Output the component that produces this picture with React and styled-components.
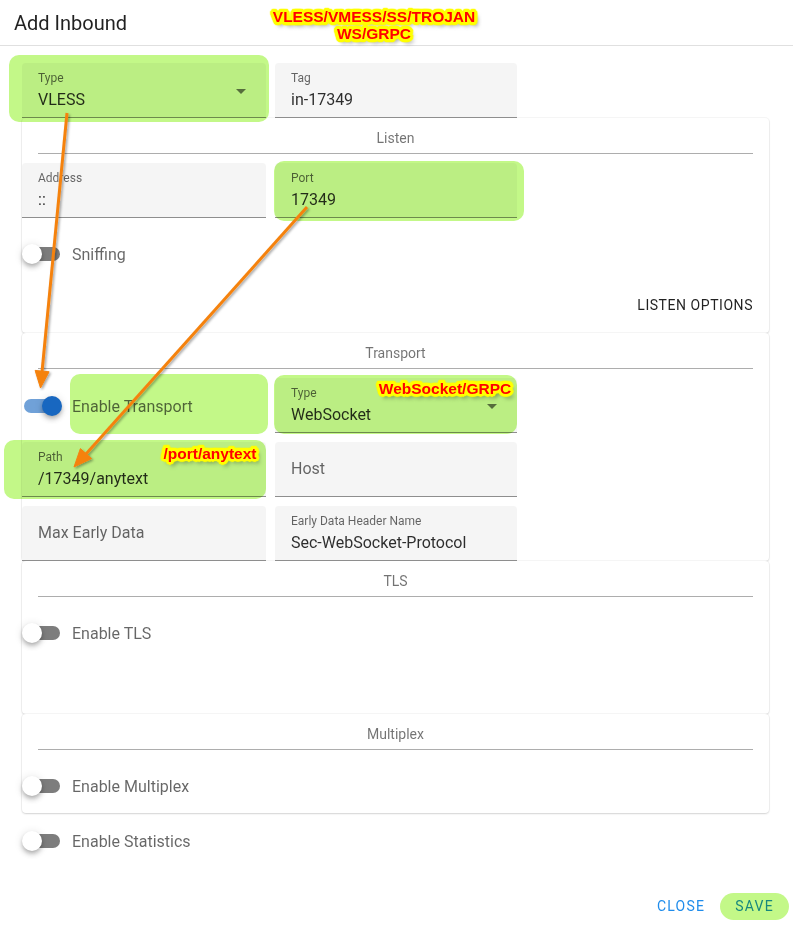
import React from 'react';
import styled, { createGlobalStyle, css } from 'styled-components';

const GlobalStyle = createGlobalStyle`
  html, body {
    margin: 0;
    padding: 0;
    background: #fff;
  }
  body {
    font-family: Roboto, "Liberation Sans", sans-serif;
  }
`;

// green marker boxes drawn over the screenshot
const highlight = css`
  ${props => props.$hl && css`
    &::after {
      content: '';
      position: absolute;
      inset: ${props.$hl};
      background: #c3f888;
      border-radius: ${props.$radius || '10px'};
      mix-blend-mode: multiply;
      pointer-events: none;
    }
  `}
`;

const Dialog = styled.div`
  position: relative;
  width: 793px;
  height: 928px;
  overflow: hidden;
  background: #fff;
`;

const Header = styled.div`
  height: 45px;
  border-bottom: 1px solid rgba(0, 0, 0, 0.12);
  padding-left: 14px;
  display: flex;
  align-items: center;
  font-size: 20px;
  color: rgba(0, 0, 0, 0.87);
`;

const Body = styled.div`
  padding: 17px 24px 0 22px;
`;

const FieldGrid = styled.div`
  display: grid;
  grid-template-columns: 244px 242px;
  column-gap: 9px;
  row-gap: 9px;
  margin-top: ${props => props.$mt || '0px'};
`;

const Field = styled.div`
  position: relative;
  box-sizing: border-box;
  height: 55px;
  padding: 0 16px;
  background: #f5f5f5;
  border-radius: 4px 4px 0 0;
  border-bottom: 1px solid rgba(0, 0, 0, 0.42);
  display: flex;
  flex-direction: column;
  justify-content: ${props => (props.$empty ? 'center' : 'flex-start')};
  ${highlight}
`;

const FieldLabel = styled.div`
  margin-top: 8px;
  font-size: 12px;
  line-height: 14px;
  color: rgba(0, 0, 0, 0.6);
`;

const FieldValue = styled.div`
  margin-top: 3px;
  font-size: 16px;
  line-height: 24px;
  color: rgba(0, 0, 0, 0.82);
`;

const Placeholder = styled.div`
  font-size: 16px;
  line-height: 24px;
  color: rgba(0, 0, 0, 0.6);
`;

const Caret = styled.span`
  position: absolute;
  right: 20px;
  top: 26px;
  width: 0;
  height: 0;
  border-left: 5px solid transparent;
  border-right: 5px solid transparent;
  border-top: 5px solid rgba(0, 0, 0, 0.54);
`;

const Card = styled.div`
  border-radius: 4px;
  background: #fff;
  box-shadow: 0 0 0 1px rgba(0, 0, 0, 0.035), 0 1px 2px rgba(0, 0, 0, 0.14);
  padding-bottom: ${props => props.$pb || '0px'};
`;

const CardTitle = styled.div`
  padding-top: 10px;
  font-size: 14px;
  line-height: 20px;
  text-align: center;
  color: rgba(0, 0, 0, 0.55);
`;

const Divider = styled.div`
  margin: 5px 16px 0;
  height: 1px;
  background: rgba(0, 0, 0, 0.32);
`;

const SwitchRow = styled.div`
  display: flex;
  align-items: center;
  height: ${props => props.$h || '40px'};
  margin-top: ${props => props.$mt || '0px'};
`;

const SwitchControl = styled.div`
  position: relative;
  flex: none;
  width: 40px;
  height: 20px;
  margin-right: 10px;
`;

const Track = styled.div`
  position: absolute;
  left: 2px;
  top: 3px;
  width: 36px;
  height: 14px;
  border-radius: 7px;
  background: ${props => (props.$on ? 'rgba(24, 103, 192, 0.62)' : '#7d7d7d')};
`;

const Thumb = styled.div`
  position: absolute;
  top: 0;
  left: ${props => (props.$on ? '20px' : '0px')};
  width: 20px;
  height: 20px;
  border-radius: 50%;
  background: ${props => (props.$on ? '#1867c0' : '#fff')};
  box-shadow: 0 2px 4px -1px rgba(0, 0, 0, 0.2), 0 4px 5px 0 rgba(0, 0, 0, 0.14),
    0 1px 10px 0 rgba(0, 0, 0, 0.12);
`;

const SwitchLabel = styled.div`
  position: relative;
  flex: ${props => (props.$grow ? '1' : 'none')};
  align-self: stretch;
  display: flex;
  align-items: center;
  padding-top: ${props => props.$pt || '0px'};
  font-size: 16px;
  color: rgba(0, 0, 0, 0.6);
  ${highlight}
`;

const OptionsRow = styled.div`
  display: flex;
  justify-content: flex-end;
  margin-top: 13px;
  padding-right: 16px;
`;

const TextButton = styled.button`
  position: relative;
  height: 36px;
  padding: 0 ${props => props.$px || '0px'};
  border: none;
  background: transparent;
  font-family: Roboto, "Liberation Sans", sans-serif;
  font-size: 14px;
  letter-spacing: ${props => props.$ls || '1.25px'};
  text-transform: uppercase;
  color: ${props => props.$color || 'rgba(0, 0, 0, 0.87)'};
  cursor: pointer;
  ${highlight}
`;

const Footer = styled.div`
  display: flex;
  justify-content: flex-end;
  margin-top: 27px;
  padding-right: 4px;
`;

const Overlay = styled.div`
  position: absolute;
  inset: 0;
  pointer-events: none;
`;

const ring = [];
for (let i = 0; i < 24; i++) {
  const a = (i / 24) * Math.PI * 2;
  ring.push(`${(Math.cos(a) * 3).toFixed(2)}px ${(Math.sin(a) * 3).toFixed(2)}px 1px #ffff00`);
}
const yellowRing = ring.join(', ');

const Callout = styled.div`
  position: absolute;
  left: ${props => props.$x}px;
  top: ${props => props.$y}px;
  transform: translate(-50%, -50%);
  font-family: "Liberation Sans", Arial, sans-serif;
  font-weight: 700;
  font-size: 15.5px;
  line-height: 17px;
  text-align: center;
  white-space: nowrap;
  color: #ff0000;
  text-shadow: ${yellowRing}, 3px 4px 4px rgba(0, 0, 0, 0.55);
`;

const Switch = ({ on }) => (
  <SwitchControl>
    <Track $on={on} />
    <Thumb $on={on} />
  </SwitchControl>
);

const Arrows = () => (
  <svg width="793" height="928" style={{ position: 'absolute', left: 0, top: 0 }}>
    <defs>
      <filter id="shadow" x="-20%" y="-20%" width="140%" height="140%">
        <feDropShadow dx="1.5" dy="1.5" stdDeviation="1" floodColor="#000" floodOpacity="0.35" />
      </filter>
    </defs>
    <g filter="url(#shadow)" fill="#f5820f" stroke="#f5820f">
      <line x1="67" y1="113" x2="42" y2="372" strokeWidth="3" />
      <polygon points="40.5,388 49.1,371.8 35.1,370.4" strokeWidth="1" strokeLinejoin="round" />
      <line x1="307" y1="207" x2="86" y2="454" strokeWidth="3" />
      <polygon points="74,467 91.6,458.6 80.4,448.6" strokeWidth="1" strokeLinejoin="round" />
    </g>
  </svg>
);

const App = () => (
  <>
    <GlobalStyle />
    <Dialog>
      <Header>Add Inbound</Header>
      <Body>
        <FieldGrid>
          <Field $hl="-8px -3px -5px -13px">
            <FieldLabel>Type</FieldLabel>
            <FieldValue>VLESS</FieldValue>
            <Caret />
          </Field>
          <Field>
            <FieldLabel>Tag</FieldLabel>
            <FieldValue>in-17349</FieldValue>
          </Field>
        </FieldGrid>

        <Card $pb="10px">
          <CardTitle>Listen</CardTitle>
          <Divider />
          <FieldGrid $mt="9px">
            <Field>
              <FieldLabel>Address</FieldLabel>
              <FieldValue>::</FieldValue>
            </Field>
            <Field $hl="-2px -7px -4px -1px">
              <FieldLabel>Port</FieldLabel>
              <FieldValue>17349</FieldValue>
            </Field>
          </FieldGrid>
          <SwitchRow $mt="16px">
            <Switch />
            <SwitchLabel>Sniffing</SwitchLabel>
          </SwitchRow>
          <OptionsRow>
            <TextButton $ls="0.55px">Listen Options</TextButton>
          </OptionsRow>
        </Card>

        <Card>
          <CardTitle>Transport</CardTitle>
          <Divider />
          <FieldGrid $mt="9px">
            <SwitchRow $h="55px">
              <Switch on />
              <SwitchLabel $grow $pt="2px" $hl="-4px -2px -1px -2px">Enable Transport</SwitchLabel>
            </SwitchRow>
            <Field $hl="-3px 0 -2px -1px">
              <FieldLabel>Type</FieldLabel>
              <FieldValue>WebSocket</FieldValue>
              <Caret />
            </Field>
            <Field $hl="-2px 0 -3px -18px">
              <FieldLabel>Path</FieldLabel>
              <FieldValue>/17349/anytext</FieldValue>
            </Field>
            <Field $empty>
              <Placeholder>Host</Placeholder>
            </Field>
            <Field $empty>
              <Placeholder>Max Early Data</Placeholder>
            </Field>
            <Field>
              <FieldLabel>Early Data Header Name</FieldLabel>
              <FieldValue>Sec-WebSocket-Protocol</FieldValue>
            </Field>
          </FieldGrid>
        </Card>

        <Card $pb="61px">
          <CardTitle>TLS</CardTitle>
          <Divider />
          <SwitchRow $mt="16px">
            <Switch />
            <SwitchLabel>Enable TLS</SwitchLabel>
          </SwitchRow>
        </Card>

        <Card $pb="7px">
          <CardTitle>Multiplex</CardTitle>
          <Divider />
          <SwitchRow $mt="16px">
            <Switch />
            <SwitchLabel>Enable Multiplex</SwitchLabel>
          </SwitchRow>
        </Card>

        <SwitchRow $mt="8px">
          <Switch />
          <SwitchLabel>Enable Statistics</SwitchLabel>
        </SwitchRow>
      </Body>

      <Footer>
        <TextButton $px="15px" $color="#1f8ceb">Close</TextButton>
        <TextButton $px="15px" $color="#1f8ceb" $hl="5px 0 4px 0" $radius="14px">Save</TextButton>
      </Footer>

      <Overlay>
        <Arrows />
        <Callout $x={374} $y={25}>
          VLESS/VMESS/SS/TROJAN
          <br />
          WS/GRPC
        </Callout>
        <Callout $x={445} $y={388}>WebSocket/GRPC</Callout>
        <Callout $x={210} $y={453}>/port/anytext</Callout>
      </Overlay>
    </Dialog>
  </>
);

export default App;
